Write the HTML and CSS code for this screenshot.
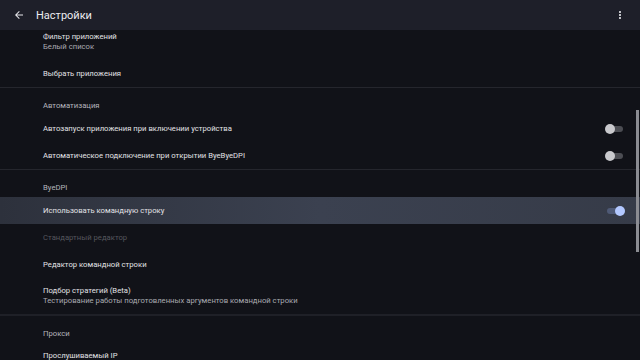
FILE: index.html
```html
<!DOCTYPE html>
<html lang="ru">
<head>
  <meta charset="UTF-8" />
  <meta name="viewport" content="width=device-width, initial-scale=1.0" />
  <title>Настройки</title>
  <link rel="stylesheet" href="styles.css">
</head>
<body>
  <div class="app">
    <header class="toolbar">
      <button class="icon-btn back" aria-label="Назад">
        <svg width="12" height="12" viewBox="0 0 24 24"><path d="M20 11H7.83l5.59-5.59L12 4l-8 8 8 8 1.41-1.41L7.83 13H20v-2z" fill="#e6e6ea"/></svg>
      </button>
      <h1 class="title">Настройки</h1>
      <button class="icon-btn menu" aria-label="Ещё">
        <svg width="12" height="12" viewBox="0 0 24 24"><path d="M12 8c1.1 0 2-.9 2-2s-.9-2-2-2-2 .9-2 2 .9 2 2 2zm0 2c-1.1 0-2 .9-2 2s.9 2 2 2 2-.9 2-2-.9-2-2-2zm0 6c-1.1 0-2 .9-2 2s.9 2 2 2 2-.9 2-2-.9-2-2-2z" fill="#e6e6ea"/></svg>
      </button>
    </header>

    <main class="content">
      <div class="list">
        <div class="pref two-line">
          <div class="pref-title">Фильтр приложений</div>
          <div class="pref-summary">Белый список</div>
        </div>
        <div class="pref">
          <div class="pref-title">Выбрать приложения</div>
        </div>

        <div class="divider"></div>

        <div class="category">Автоматизация</div>
        <div class="pref">
          <div class="pref-title">Автозапуск приложения при включении устройства</div>
          <span class="switch"></span>
        </div>
        <div class="pref">
          <div class="pref-title">Автоматическое подключение при открытии ByeByeDPI</div>
          <span class="switch"></span>
        </div>

        <div class="divider"></div>

        <div class="category">ByeDPI</div>
        <div class="pref focused">
          <div class="pref-title">Использовать командную строку</div>
          <span class="switch on"></span>
        </div>
        <div class="pref disabled">
          <div class="pref-title">Стандартный редактор</div>
        </div>
        <div class="pref">
          <div class="pref-title">Редактор командной строки</div>
        </div>
        <div class="pref two-line">
          <div class="pref-title">Подбор стратегий (Beta)</div>
          <div class="pref-summary">Тестирование работы подготовленных аргументов командной строки</div>
        </div>

        <div class="divider thick"></div>

        <div class="category">Прокси</div>
        <div class="pref two-line">
          <div class="pref-title">Прослушиваемый IP</div>
          <div class="pref-summary">127.0.0.1</div>
        </div>
      </div>
      <div class="scrollbar"></div>
    </main>
  </div>
</body>
</html>
```

FILE: styles.css
```css
body {
  margin: 0;
  background-color: #111218;
  font-family: Roboto, "Noto Sans", sans-serif;
  color: #e2e2e6;
}

.app {
  width: 640px;
  height: 360px;
  display: flex;
  flex-direction: column;
  overflow: hidden;
}

.toolbar {
  height: 30px;
  flex-shrink: 0;
  display: flex;
  align-items: center;
  background-color: #1e1f29;
  padding: 0 10px 0 9px;
}

.icon-btn {
  width: 20px;
  height: 20px;
  display: flex;
  align-items: center;
  justify-content: center;
  background: none;
  border: none;
  padding: 0;
}

.title {
  flex: 1;
  margin: 0 0 0 7px;
  font-size: 11px;
  font-weight: 400;
  color: #ececf0;
}

.content {
  flex: 1;
  position: relative;
  overflow: hidden;
}

.list {
  margin-top: -6px;
}

.pref {
  height: 27px;
  display: flex;
  align-items: center;
  padding: 0 17px 0 43px;
  font-size: 7.7px;
}

.pref.two-line {
  height: 36px;
  flex-direction: column;
  align-items: flex-start;
  justify-content: center;
}

.pref-title {
  flex: 1;
  color: #e2e2e6;
}

.two-line .pref-title {
  flex: none;
  line-height: 10px;
}

.pref-summary {
  line-height: 10px;
  color: #a9aab1;
}

.pref.focused {
  background: linear-gradient(90deg, #2d313c 0%, #3b4150 50%, #363b48 100%);
}

.pref.disabled .pref-title {
  color: #55565d;
}

.category {
  height: 27px;
  box-sizing: border-box;
  padding: 13px 0 0 43px;
  font-size: 7.7px;
  line-height: 10px;
  color: #b4b5bc;
}

.divider {
  height: 1px;
  background-color: #25262d;
}

.divider.thick {
  height: 2px;
  background-color: #1f2027;
}

.switch {
  position: relative;
  width: 16px;
  height: 6px;
  border-radius: 3px;
  background-color: #4c4d53;
}

.switch::after {
  content: "";
  position: absolute;
  top: -2px;
  left: -2px;
  width: 10px;
  height: 10px;
  border-radius: 50%;
  background-color: #c9c9cd;
}

.switch.on {
  background-color: #4f5a76;
}

.switch.on::after {
  left: auto;
  right: -2px;
  background-color: #b3c8ff;
}

.scrollbar {
  position: absolute;
  top: 80px;
  right: 1px;
  width: 3px;
  height: 142px;
  background-color: #8b8c92;
}
```
